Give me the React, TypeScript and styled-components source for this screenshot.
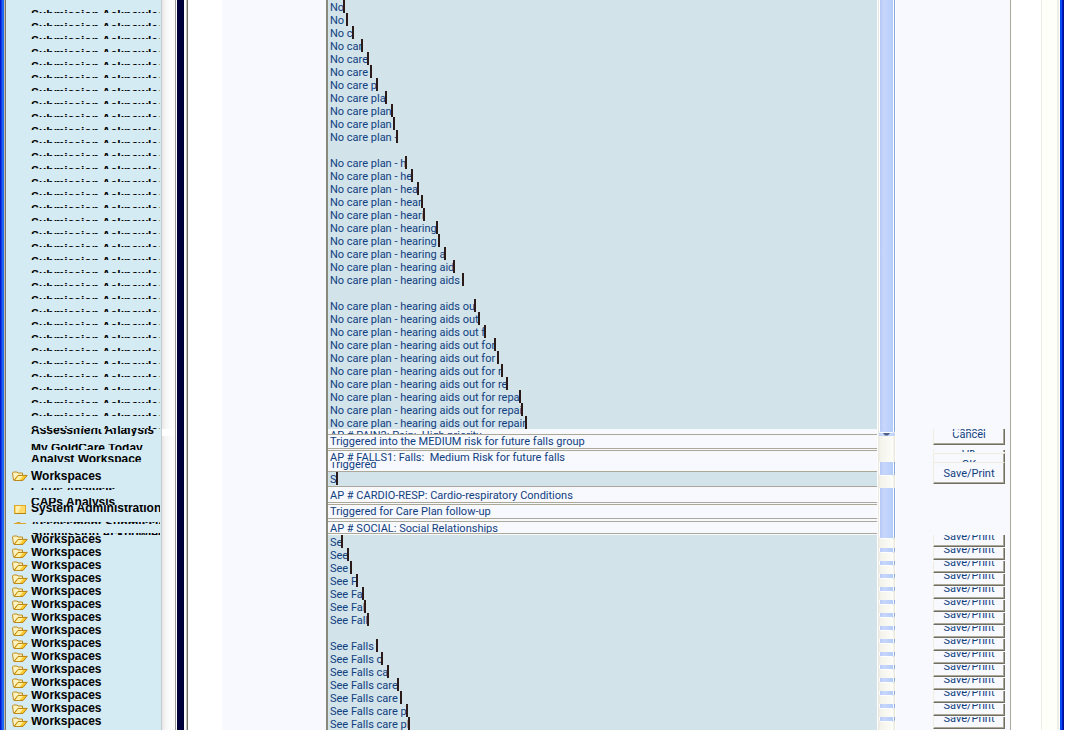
import React from "react";
import styled, { createGlobalStyle } from "styled-components";

const Global = createGlobalStyle`
  * { box-sizing: border-box; }
  body { margin: 0; background: #fff; }
`;

const ink = "#0f4080";
const line = "#aca899";
const pale = "#f8f9ff";
const field = "#d2e3ea";

const Desktop = styled.div`
  display: flex;
  padding: 0 10px 2px 0;
  font-family: Roboto, "Liberation Sans", sans-serif;
  font-size: 11px;
  color: ${ink};
`;

const FrameLeft = styled.div`
  flex: 0 0 6px;
  background: linear-gradient(to right, #0019cf 0 1px, #0a3ce6 1px 2px, #1c66f0 2px 4px, #c0bdb0 4px 5px, #77756a 5px 6px);
`;

const FrameRight = styled.div`
  flex: 0 0 4px;
  background: linear-gradient(to right, #0a4bf0 0 2px, #0019cf 2px 3px, #00138c 3px 4px);
`;

const Sidebar = styled.nav`
  flex: 0 0 156px;
  background: #d5ebf3;
  border-right: 1px solid #c4cace;
  padding: 0 1px 0 6px;
  overflow: hidden;
`;

const NavItem = styled.a<{ $gap: number; $h: number }>`
  display: flex;
  align-items: flex-start;
  height: ${(p) => p.$h}px;
  margin-top: ${(p) => p.$gap}px;
  overflow: hidden;
  color: #000;
  text-decoration: none;
  font: bold 12px/8px "Liberation Sans", Arial, sans-serif;
  white-space: nowrap;
`;

const NavIcon = styled.span<{ $skip: number }>`
  flex: 0 0 19px;
  height: 10px;
  margin-top: ${(p) => -p.$skip}px;
  svg { display: block; }
`;

const NavText = styled.span<{ $skip: number }>`
  margin-top: ${(p) => -p.$skip}px;
`;

const SideTrack = styled.div`
  display: flex;
  flex-direction: column;
  flex: 0 0 14px;
  border-right: 1px solid #9b9a94;
  background: linear-gradient(to right, #e6e6e6, #f4f4f4 3px, #fcfcfc 8px);
`;

const SideGap = styled.div`
  height: 7px;
  margin-top: 429px;
  background: #fff;
`;

const Splitter = styled.div`
  flex: 0 0 12px;
  background: linear-gradient(to right, #fff 0 1px, #00003c 1px 7px, #000028 7px 8px, #fff 8px 10px, #c9c5ba 10px 11px, #77756a 11px 12px);
`;

const Page = styled.main`
  flex: 1 1 0;
  min-width: 0;
  display: flex;
  padding: 0 30px 0 34px;
`;

const Panel = styled.section`
  flex: 1 1 0;
  min-width: 0;
  display: flex;
  background: ${pale};
  border-right: 1px solid ${line};
  padding: 0 5px 0 104px;
`;

const Notes = styled.div`
  flex: 1 1 0;
  min-width: 0;
  border-left: 2px solid #8a887b;
`;

const TextBlock = styled.div`
  background: ${field};
`;

const Typed = styled.div`
  height: 13px;
  padding: 1px 0 0 2px;
  line-height: 13px;
  white-space: pre;
  display: flex;
`;

const Caret = styled.span`
  width: 2px;
  height: 13px;
  margin: -1px 0 0 -1px;
  background: #2b1a17;
`;

const Entry = styled.div<{ $h: number; $fill?: boolean; $indent?: number; $gap?: number; $pad?: number; $top?: boolean; $bottom?: boolean }>`
  height: ${(p) => p.$h}px;
  margin-top: ${(p) => p.$gap ?? 0}px;
  padding: ${(p) => p.$pad ?? 0}px 0 0 ${(p) => p.$indent ?? 2}px;
  background: ${(p) => (p.$fill ? field : pale)};
  border: 0 solid ${line};
  border-top-width: ${(p) => (p.$top ? 1 : 0)}px;
  border-bottom-width: ${(p) => (p.$bottom ? 1 : 0)}px;
  line-height: 13px;
  white-space: pre;
  overflow: hidden;
`;

const Shifted = styled.div<{ $skip: number }>`
  margin-top: ${(p) => -p.$skip}px;
`;

const ScrollTrack = styled.div`
  flex: 0 0 19px;
  padding: 0 1px 0 2px;
  background: linear-gradient(to right, #fff 0 1px, #ebe9e0 1px 2px, #f3f2ea 3px, #fdfdf9 16px, #ece9dc 17px 18px, #fff 18px 19px);
`;

const Thumb = styled.div<{ $h: number; $gap?: number }>`
  height: ${(p) => p.$h}px;
  margin-top: ${(p) => p.$gap ?? 0}px;
  padding: 0 1px 1px 0;
  border-radius: 0 0 3px 3px;
  background: #86a8dc;
  &::before {
    content: "";
    display: block;
    height: 100%;
    border: solid #fff;
    border-width: 0 1px 1px 1px;
    border-radius: 0 0 2px 2px;
    background: linear-gradient(to right, #b5c9f8, #c8d6fb 4px, #bfd2fc 8px, #b3cdfa);
  }
`;

const Notch = styled.div`
  height: 3px;
  padding-left: 4px;
  background: #c3d4fb;
  svg { display: block; }
`;

const Actions = styled.div`
  flex: 0 0 72px;
  margin-left: 37px;
`;

const ActionButton = styled.button<{ $h: number; $gap?: number; $lid?: boolean; $open?: boolean }>`
  display: flex;
  flex-direction: column;
  align-items: center;
  width: 100%;
  height: ${(p) => p.$h}px;
  margin: ${(p) => p.$gap ?? 0}px 0 0;
  padding: 0;
  overflow: hidden;
  background: ${pale};
  color: ${ink};
  border: solid;
  border-color: #f0eddf #716f64 #716f64 #f0eddf;
  border-width: ${(p) => (p.$lid ? 1 : 0)}px 1px ${(p) => (p.$open ? 0 : 1)}px 1px;
  box-shadow: inset -1px ${(p) => (p.$open ? 0 : -1)}px 0 ${line};
  font: 11px/9px Roboto, "Liberation Sans", sans-serif;
`;

const ActionText = styled.span<{ $h: number; $skip?: number; $gap?: number }>`
  display: block;
  height: ${(p) => p.$h}px;
  margin-top: ${(p) => p.$gap ?? 0}px;
  overflow: hidden;
  span { display: block; margin-top: ${(p) => -(p.$skip ?? 0)}px; }
`;

const Margin = styled.div`
  flex: 0 0 19px;
  background: linear-gradient(to right, #efefe8 0 1px, #fffffa 1px 16px, #ededea 16px 18px, #fff 18px 19px);
`;

const Folder = () => (
  <svg width="16" height="10" viewBox="0 0 16 10" aria-hidden="true">
    <path d="M1.5 9 0.5 2 1.5 1H5L6 2H10.5V4" fill="#fdf3c0" stroke="#c08a1a" />
    <path d="M2 9.4 6 4.4H15.2L11 9.4Z" fill="#fcc92e" stroke="#b8800f" />
    <path d="M6.4 5H11L8 9H3.4Z" fill="#fff0a8" />
  </svg>
);

const ClosedFolder = () => (
  <svg width="16" height="10" viewBox="0 0 16 10" aria-hidden="true">
    <path d="M4 1.5 5 0.5H8L9 1.5" fill="#d9b04a" stroke="#c9a040" />
    <rect x="2.5" y="1.5" width="11" height="8" fill="#fcd968" stroke="#e0a82a" />
    <path d="M4 2H9L6 9H4Z" fill="#fff0b0" />
    <path d="M3 9.5H14" stroke="#b8800f" />
  </svg>
);

type Nav = { text: string; gap: number; h: number; skip?: number; icon?: "open" | "closed"; iconSkip?: number };

const navItems: Nav[] = [
  ...Array.from({ length: 33 }, () => ({ text: "Submission Acknowledgement", gap: 10, h: 3, skip: -1 })),
  { text: "Assessment Analysis", gap: 0, h: 7, skip: 3 },
  { text: "My GoldCare Today", gap: 8, h: 6 },
  { text: "Analyst Workspace", gap: 5, h: 7 },
  { text: "Workspaces", gap: 9, h: 13, skip: -1, icon: "open" },
  { text: "CAPs Analysis", gap: 4, h: 2, skip: 2 },
  { text: "CAPs Analysis", gap: 8, h: 7 },
  { text: "System Administration", gap: 0, h: 12, skip: 1, icon: "closed", iconSkip: 1 },
  { text: "Assessment Submission", gap: 5, h: 2, skip: 2, icon: "closed" },
  { text: "Submission Acknowledgement", gap: 9, h: 2, skip: 3 },
  ...Array.from({ length: 15 }, (): Nav => ({ text: "Workspaces", gap: 0, h: 13, icon: "open" })),
];

const hearingLines = [
  "No", "No ", "No c", "No car", "No care", "No care ", "No care p", "No care pla", "No care plan",
  "No care plan ", "No care plan -", "", "No care plan - h", "No care plan - he", "No care plan - hea",
  "No care plan - hear", "No care plan - heari", "No care plan - hearing", "No care plan - hearing ",
  "No care plan - hearing a", "No care plan - hearing aid", "No care plan - hearing aids ", "",
  "No care plan - hearing aids ou", "No care plan - hearing aids out", "No care plan - hearing aids out f",
  "No care plan - hearing aids out for", "No care plan - hearing aids out for ",
  "No care plan - hearing aids out for r", "No care plan - hearing aids out for re",
  "No care plan - hearing aids out for repa", "No care plan - hearing aids out for repai",
  "No care plan - hearing aids out for repair",
];

const fallsLines = [
  "Se", "See", "See ", "See F", "See Fa", "See Fal", "See Fall", "", "See Falls ", "See Falls c",
  "See Falls ca", "See Falls care", "See Falls care ", "See Falls care p", "See Falls care pl",
];

const TypedLines = ({ lines }: { lines: string[] }) => (
  <TextBlock>
    {lines.map((t, i) => (
      <Typed key={i}>
        {t}
        {t && <Caret />}
      </Typed>
    ))}
  </TextBlock>
);

export default function App() {
  return (
    <Desktop>
      <Global />
      <FrameLeft />
      <Sidebar>
        {navItems.map((n, i) => (
          <NavItem key={i} href="#" $gap={n.gap} $h={n.h}>
            <NavIcon $skip={n.iconSkip ?? 0}>
              {n.icon === "open" && <Folder />}
              {n.icon === "closed" && <ClosedFolder />}
            </NavIcon>
            <NavText $skip={n.skip ?? 0}>{n.text}</NavText>
          </NavItem>
        ))}
      </Sidebar>
      <SideTrack>
        <SideGap />
      </SideTrack>
      <Splitter />
      <Page>
        <Panel>
          <Notes>
            <TypedLines lines={hearingLines} />
            <Entry $h={5}>AP # PAIN2: Pain:  High priority</Entry>
            <Entry $h={15} $top $bottom>Triggered into the MEDIUM risk for future falls group</Entry>
            <Entry $h={12} $gap={1} $top>AP # FALLS1: Falls:  Medium Risk for future falls</Entry>
            <Entry $h={9}>
              <Shifted $skip={4}>Triggered</Shifted>
            </Entry>
            <Entry $h={16} $indent={0} $top $bottom $fill>
              <Typed>S<Caret /></Typed>
            </Entry>
            <Entry $h={16} $pad={2} $bottom>AP # CARDIO-RESP: Cardio-respiratory Conditions</Entry>
            <Entry $h={15} $gap={1} $top $bottom>Triggered for Care Plan follow-up</Entry>
            <Entry $h={13} $gap={2} $top $bottom>AP # SOCIAL: Social Relationships</Entry>
            <Entry $h={1} />
            <TypedLines lines={fallsLines} />
          </Notes>
          <ScrollTrack>
            <Thumb $h={433} />
            <Notch>
              <svg width="7" height="3" viewBox="0 0 7 3" aria-hidden="true">
                <path d="M0 0H7L5 2.5H2Z" fill="#4d6185" />
              </svg>
            </Notch>
            <Thumb $h={14} $gap={26} />
            <Thumb $h={51} $gap={12} />
            {Array.from({ length: 14 }, (_, i) => (
              <Thumb key={i} $h={5} $gap={i === 0 ? 9 : 8} />
            ))}
          </ScrollTrack>
          <Actions>
            <ActionButton $h={16} $gap={429}>
              <ActionText $h={2} $skip={2}><span>Cancel</span></ActionText>
              <ActionText $h={6} $skip={2} $gap={1}><span>Cancel</span></ActionText>
            </ActionButton>
            <ActionButton $h={2} $gap={5} $open aria-label="OK">
              <ActionText $h={2} $skip={4}><span>OK</span></ActionText>
            </ActionButton>
            <ActionButton $h={9} $gap={1} $lid $open>
              <ActionText $h={2} $gap={6}><span>OK</span></ActionText>
            </ActionButton>
            <ActionButton $h={22} $lid>
              <ActionText $h={12} $gap={6}><span>Save/Print</span></ActionText>
            </ActionButton>
            {Array.from({ length: 15 }, (_, i) => (
              <ActionButton key={i} $h={12} $gap={i === 0 ? 51 : 1}>
                <ActionText $h={6} $skip={3}><span>Save/Print</span></ActionText>
              </ActionButton>
            ))}
          </Actions>
        </Panel>
      </Page>
      <Margin />
      <FrameRight />
    </Desktop>
  );
}
